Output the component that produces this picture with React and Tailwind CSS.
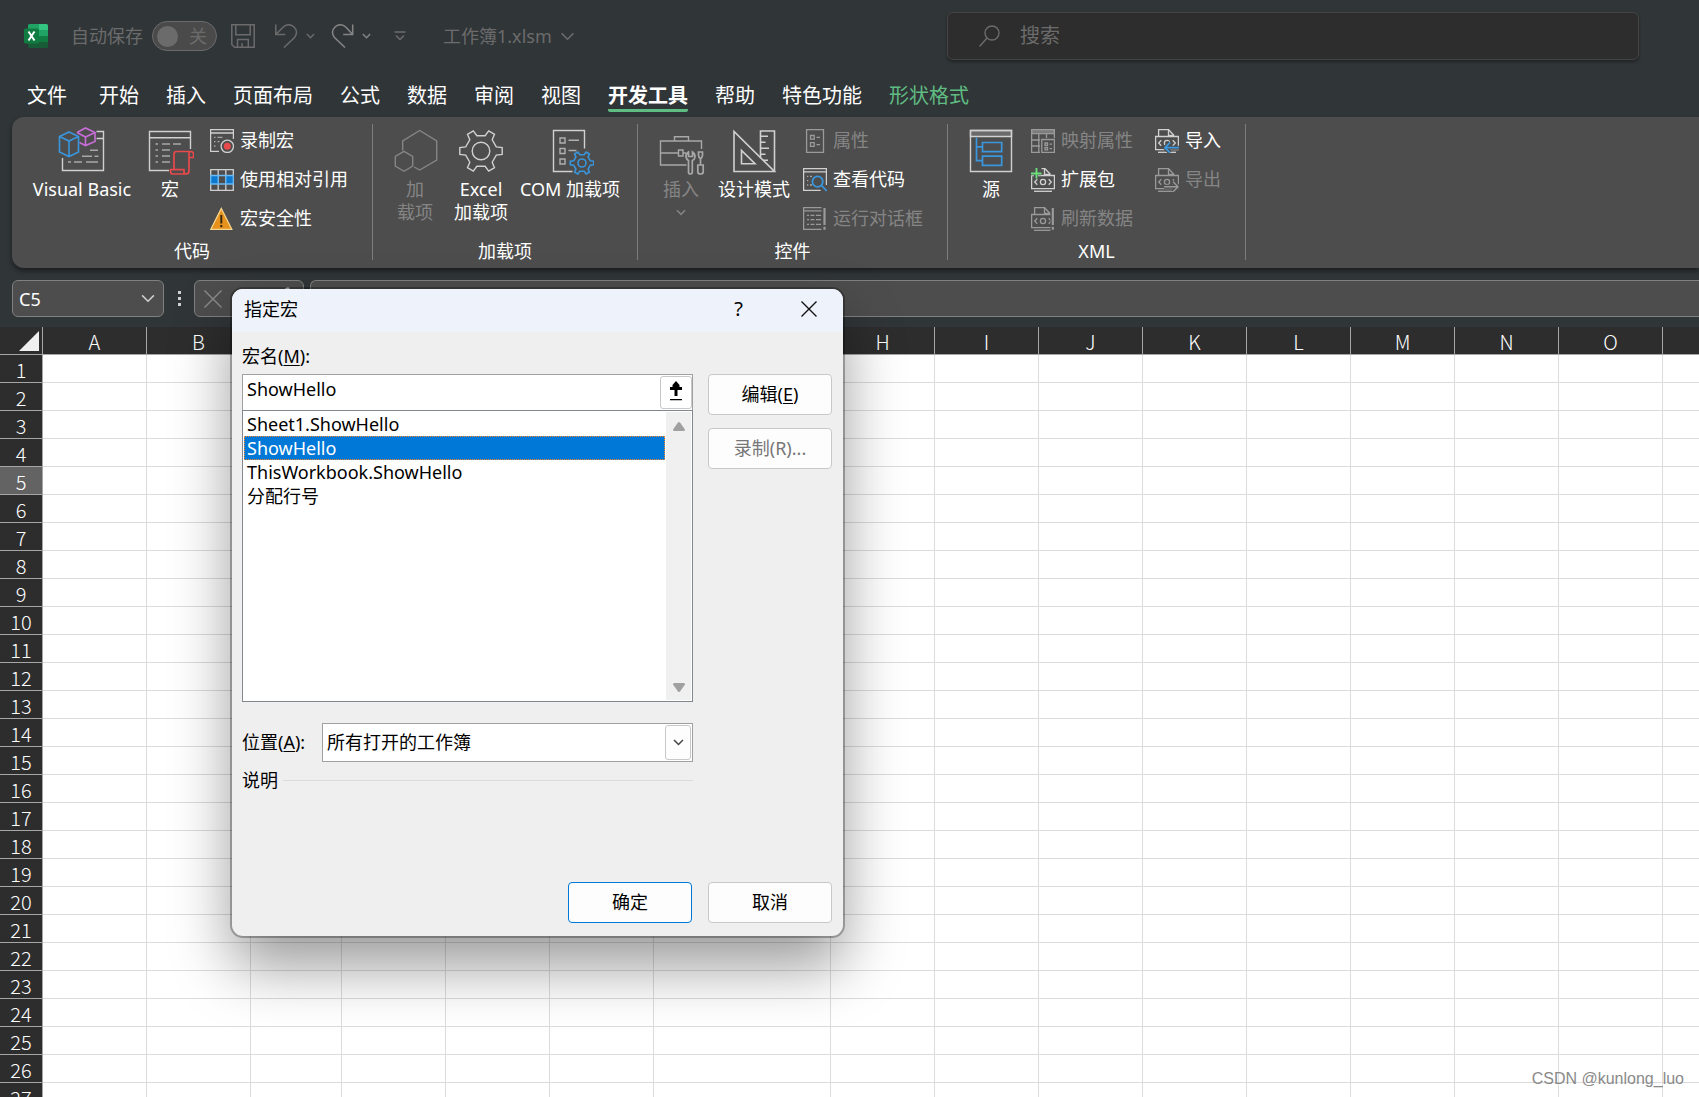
import React from "react";

const tabs = [
  { name: "开始" },
  { name: "插入" },
  { name: "页面布局" },
  { name: "公式" },
  { name: "数据" },
  { name: "审阅" },
  { name: "视图" },
  { name: "开发工具", active: true },
  { name: "帮助" },
  { name: "特色功能" },
  { name: "形状格式", contextual: true },
];

const columns = [
  { name: "A", width: 104 },
  { name: "B", width: 104 },
  { name: "C", width: 91 },
  { name: "D", width: 104 },
  { name: "E", width: 104 },
  { name: "F", width: 104 },
  { name: "G", width: 177 },
  { name: "H", width: 104 },
  { name: "I", width: 104 },
  { name: "J", width: 104 },
  { name: "K", width: 104 },
  { name: "L", width: 104 },
  { name: "M", width: 104 },
  { name: "N", width: 104 },
  { name: "O", width: 104 },
  { name: "", width: 104 },
];

const rows = Array.from({ length: 27 }, (_, i) => i + 1);

const macros = ["Sheet1.ShowHello", "ShowHello", "ThisWorkbook.ShowHello", "分配行号"];

// Outline of a six-tooth gear: two outer points and two valley points per tooth
function gearPath(cx, cy, outer, inner) {
  const points = [];
  for (let i = 0; i < 6; i++) {
    [
      [-15, inner],
      [-9, outer],
      [9, outer],
      [15, inner],
    ].forEach(([offset, r]) => {
      const a = ((i * 60 + offset) * Math.PI) / 180;
      points.push(`${(cx + r * Math.cos(a)).toFixed(1)} ${(cy + r * Math.sin(a)).toFixed(1)}`);
    });
  }
  return `M${points.join("L")}Z`;
}

function BigIcon({ children }) {
  return (
    <svg viewBox="0 0 48 48" className="size-12 shrink-0" fill="none" stroke="#d0d0d0" strokeWidth="1.4" aria-hidden="true">
      {children}
    </svg>
  );
}

function SmallIcon({ children, dim }) {
  return (
    <svg viewBox="0 0 24 24" className="size-6 shrink-0" fill="none" stroke={dim ? "#9a9a9a" : "#d0d0d0"} strokeWidth="1.3" aria-hidden="true">
      {children}
    </svg>
  );
}

function Chevron({ className }) {
  return (
    <svg viewBox="0 0 16 10" className={className} fill="none" stroke="currentColor" strokeWidth="1.5" aria-hidden="true">
      <path vectorEffect="non-scaling-stroke" d="M1.5 1.5 8 8l6.5-6.5" />
    </svg>
  );
}

/* ---------- ribbon icons ---------- */

const VisualBasicIcon = () => (
  <BigIcon>
    <path d="M38.5 4.5h7v39h-41V31M38.5 11.5h7" />
    <path stroke="#a8a8a8" d="M32 23.3h8M24 29.2h10M36.5 29.2h4M10 35h3M16 35h8M28 35h12" />
    <path stroke="#c86dd7" strokeWidth="1.6" d="M19 5.5 27.5 1l9.5 4.5v9l-9.500 4-6-3M19 5.500l8.500 4.500 9.500-4.500M27.500 10v8.500" />
    <path stroke="#3a96dd" strokeWidth="1.6" d="m11 5 9.500 4.500V25L11 29.500 1.500 25V9.500zM1.500 9.500 11 14l9.500-4.500M11 14v15.500" />
  </BigIcon>
);

const MacroIcon = () => (
  <BigIcon>
    <path d="M44.500 22V4.500h-41v39H23M3.500 10.700h41" />
    <path stroke="#a8a8a8" d="M9.500 17H12M16 17h8M27 17h8M9.500 23H12M16 23h8M9.500 29H12M16 29h8M9.500 35H12M16 35h8" />
    <path stroke="#e8494b" strokeWidth="1.7" d="M28 42.500V27q0-2.500 2.500-2.500H45q2.500 0 2.500 2.500v3.500H43M45 24.500q-2 0-2 2.500v17q0 3-3 3H27q-2.500 0-2.500-2.500v-1.800H38V45q0 2 2 2" />
  </BigIcon>
);

const HexIcon = () => (
  <BigIcon>
    <g stroke="#858585">
      <path d="M11.700 23.500V14l17-10.500 17 10.500v19l-17 10-5.500-3" />
      <path d="m13 24.300 8.700 5.200v9.500L13 44.300 4.300 39v-9.500z" />
    </g>
  </BigIcon>
);

const GearIcon = () => (
  <BigIcon>
    <path d={gearPath(24, 24, 21.5, 15.8)} />
    <circle cx="24" cy="24" r="8.8" />
  </BigIcon>
);

const ComIcon = () => (
  <BigIcon>
    <path d="M38.500 21.500v-18h-31v41h19" />
    <path stroke="#b0b0b0" d="M14 11h5v5h-5zM14 21.500h5v5h-5zM14 32h5v5h-5zM22.500 13.200h10.500M22.500 23.500h8" />
    <g stroke="#3a96dd" strokeWidth="1.6">
      <path d={gearPath(36, 36, 11.8, 8.6)} />
      <circle cx="36" cy="36" r="4" />
    </g>
  </BigIcon>
);

const ToolboxIcon = () => (
  <BigIcon>
    <g stroke="#a8a8a8">
      <path d="M44.500 22v-8h-41v24h26M17.500 14v-4.300h14V14M3.500 26h18M26 26h3M21.500 23h4.500v6h-4.500z" />
      <path strokeWidth="1.7" d="M31.500 25q-3 2-2.500 5 .5 2.500 2.500 3.500v12q.3 1.500 1.900 1.500t1.900-1.500v-12q2.500-1 2.700-3.500.2-3-2.500-5v4.500h-4z" />
      <path strokeWidth="1.7" d="M41.500 25h4v3.500l-1 2.500h-2l-1-2.500zM43.500 31v7M40.800 38h5.400v7q-.3 2-2.700 2t-2.700-2z" />
    </g>
  </BigIcon>
);

const DesignIcon = () => (
  <BigIcon>
    <path strokeWidth="1.6" d="M4 4.500v40h40.500zM11.500 23.500v13.200H25z" />
    <path strokeWidth="1.6" d="M30.500 31V4h14v40.500M30.500 9.300H38M30.500 15.300h5M30.500 21.300H39M30.500 27.300h5M33 33.300h5" />
  </BigIcon>
);

const SourceIcon = () => (
  <BigIcon>
    <path fill="#6a6a6a" d="M3.500 3.500h41v6h-41z" />
    <path d="M3.500 3.500h41v41h-41z" />
    <path stroke="#3a96dd" strokeWidth="1.7" d="M9.500 10.500v23.200h6M9.500 19.800h6M15.500 15.500h19.200v9.200H15.500zM15.500 29.200h19.200v9.200H15.500z" />
  </BigIcon>
);

const RecordIcon = () => (
  <SmallIcon>
    <path d="M23.400 10V.6H.6v21.800H9M.6 4h22.800" />
    <path stroke="#a8a8a8" d="M4 8.300h1.500M7.500 8.300h5M4 12.700h1.500M7.500 12.700h2M4 17h1.500" />
    <circle cx="17.3" cy="17.3" r="6.2" />
    <circle cx="17.3" cy="17.3" r="3.5" fill="#e8494b" stroke="none" />
  </SmallIcon>
);

const RelativeIcon = () => (
  <SmallIcon>
    <path d="M.7 1.700h22.600v20.600H.7zM8.200 1.700v20.600M15.800 1.700v20.600" />
    <path fill="#0c78d0" stroke="#6cb8f0" d="M.7 7.500h7.500V16H.7zM15.800 7.500h7.500V16h-7.500z" />
    <path stroke="#6cb8f0" d="M8.200 7.500h7.600M8.200 16h7.600" />
  </SmallIcon>
);

const WarningIcon = () => (
  <SmallIcon>
    <path fill="#e8921e" stroke="#f5d58c" d="M11.300 1.500 21.800 22.300H.8z" />
    <path stroke="#3b2a10" strokeWidth="2" d="M11.300 8v8.500M11.300 18v2.300" />
  </SmallIcon>
);

const PropertiesIcon = () => (
  <SmallIcon dim>
    <path d="M3.600.6h16.900v22.800H3.600zM7.500 6.500h3.700v3.700H7.500zM7.500 13.700h3.700v3.700H7.500zM13.500 8.300H17M13.500 15.600H17" />
  </SmallIcon>
);

const ViewCodeIcon = () => (
  <SmallIcon>
    <path d="M23.400 17V.6H.6v21.700h17M.6 3.800h22.800" />
    <path stroke="#a8a8a8" d="M4 8.300h1.300M7 8.300h2M4 12.700h1.300M4 17h1.300M7 17h2" />
    <g stroke="#3a96dd" strokeWidth="1.8">
      <circle cx="14.6" cy="13.6" r="5.2" />
      <path d="m18.500 17.500 5.200 5.500" />
    </g>
  </SmallIcon>
);

const RunDialogIcon = () => (
  <SmallIcon dim>
    <path d="M18.500.6H.6v21.700h17.900M.6 3.800h17.900M4 8.300h2M7.500 8.300h4M13 8.300h5M4 12.700h2M7.500 12.700h4M13 12.700h5M4 17.300h2M7.500 17.300h4M13 17.300h5" />
    <path strokeWidth="2.2" d="M21.500 1v17M21.500 19.800v3" />
  </SmallIcon>
);

const MapIcon = () => (
  <SmallIcon dim>
    <path fill="#7c7c7c" d="M.6.6h22.800v4H.6z" />
    <path d="M.6.6v22.800H9M23.400.6V9M7.800 4.600v18.800M15.500 4.600V9M.6 11h8.500M.6 17h8.500M10.800 10.500h12.600v12.900H10.800z" />
    <path d="M14 14h2.500v2.300H14zM18.500 15.200H21M14 18.500h2.500v2.300H14zM18.500 19.700H21" />
  </SmallIcon>
);

// Shared body of the XML file icons
const XmlFile = ({ open }) => (
  <>
    <path d={open ? "M10.500.7h3.500L19.500 6.500" : "M3.600 7.400V.7h10L19 6.500"} />
    <path d="M13.500.7v5.600h5.700M.6 14V7.500h22.800v13.200H.6z" />
    <path d="M6.300 11.200 3.700 14l2.600 2.800M17.700 11.200l2.600 2.800-2.600 2.800" />
    <circle cx="12" cy="14" r="2.6" />
    <path d="M3 23.300h18" />
  </>
);

const PackIcon = () => (
  <SmallIcon>
    <XmlFile open />
    <path stroke="#4d4d4d" strokeWidth="4" d="M5 1v9M0 5.200h10" />
    <path stroke="#6ce07c" strokeWidth="1.8" d="M5.500 0v10.500M0 5.500h10.500" />
  </SmallIcon>
);

const RefreshIcon = () => (
  <SmallIcon dim>
    <XmlFile />
    <path stroke="#4d4d4d" strokeWidth="5" d="M22 1v23" />
    <path strokeWidth="2.2" d="M21.800 1v17M21.800 19.800v3" />
  </SmallIcon>
);

const ImportIcon = () => (
  <SmallIcon>
    <XmlFile />
    <path stroke="#4d4d4d" strokeWidth="4" d="M24 18.700H10M15 13.500l-5 5.200 5 5" />
    <path stroke="#3a96dd" strokeWidth="1.8" d="M24 18.700H10M15 13.700l-5 5 5 5" />
  </SmallIcon>
);

const ExportIcon = () => (
  <SmallIcon dim>
    <XmlFile />
    <path stroke="#4d4d4d" strokeWidth="4" d="M9 18.700h14M18 13.500l5 5.200-5 5" />
    <path strokeWidth="1.5" d="M9 18.700h14M18 13.700l5 5-5 5" />
  </SmallIcon>
);

/* ---------- ribbon parts ---------- */

function BigButton({ icon, lines, width, disabled, menu }) {
  return (
    <button
      type="button"
      disabled={disabled}
      className={`flex flex-col items-center pt-[10px] text-lg leading-[23px] whitespace-nowrap ${width} ${disabled ? "text-[#858585]" : "text-white"}`}
    >
      {icon}
      <span className="mt-[3px] flex flex-col">
        {lines.map((line) => (
          <span key={line}>{line}</span>
        ))}
      </span>
      {menu && <Chevron className="mt-2 h-[7px] w-[10px]" />}
    </button>
  );
}

function SmallButton({ icon, label, disabled }) {
  return (
    <button
      type="button"
      disabled={disabled}
      className={`flex h-[39px] items-center gap-[6px] text-lg leading-6 whitespace-nowrap ${disabled ? "text-[#858585]" : "text-white"}`}
    >
      {icon}
      <span className="pb-0.5">{label}</span>
    </button>
  );
}

function Group({ label, width, children }) {
  return (
    <>
      <section aria-label={label} className={`flex shrink-0 flex-col pb-[5px] ${width}`}>
        <div className="flex flex-1 items-start">{children}</div>
        <div className="text-center text-lg leading-6 text-white">{label}</div>
      </section>
      <div className="mt-[7px] mb-2 w-px shrink-0 bg-[#7d7d7d]" />
    </>
  );
}

function TitleBar() {
  return (
    <header className="flex h-[72px] items-center pr-[60px] pl-6 text-lg leading-6 text-[#6b6b6b]">
      <svg viewBox="0 0 24 24" className="size-6 shrink-0" aria-label="Excel">
        <path fill="#21a366" d="M4 1.500Q4 0 5.500 0H15v6H4z" />
        <path fill="#33c481" d="M15 0h7.500Q24 0 24 1.500V6h-9z" />
        <path fill="#107c41" d="M4 6h11v6H4zM15 12h9v6h-9z" />
        <path fill="#21a366" d="M15 6h9v6h-9z" />
        <path fill="#185c37" d="M4 12h11v6h9v4.500q0 1.500-1.500 1.500h-17Q4 24 4 22.500z" />
        <rect y="4.5" width="15" height="15" rx="1.5" fill="#107c41" />
        <path stroke="#fff" strokeWidth="2" d="m4.500 7.500 6 9M10.500 7.500l-6 9" />
      </svg>
      <label className="ml-[23px] flex items-center gap-[9px]">
        自动保存
        <input type="checkbox" role="switch" className="sr-only" />
        <span className="flex h-[30px] w-[65px] items-center justify-between rounded-full border border-[#6b6b6b] bg-[#4a4a4a] pr-[9px] pl-1">
          <span className="size-[21px] rounded-full bg-[#6b6b6b]" />
          <span>关</span>
        </span>
      </label>
      <button type="button" aria-label="保存" className="ml-[14px]">
        <svg viewBox="0 0 24 24" className="size-6" fill="none" stroke="currentColor" strokeWidth="1.5">
          <path d="M.8.8h22.400v22.400H3.500L.8 20.500zM4.800.8v10h14.400V.8M6.500 23v-7.500h10.800V23M11 19v4" />
        </svg>
      </button>
      <button type="button" aria-label="撤消" className="ml-5 flex items-center gap-[7px]">
        <svg viewBox="0 0 24 24" className="size-6" fill="none" stroke="currentColor" strokeWidth="1.5">
          <path d="M.8.500v10h9.500M.8 10.500 8 3.200Q13-1.300 18.500 2.500q5.500 5 1 11L9 23.500" />
        </svg>
        <Chevron className="h-[6px] w-[9px]" />
      </button>
      <button type="button" aria-label="恢复" className="ml-4 flex items-center gap-[7px] text-[#858585]">
        <svg viewBox="0 0 24 24" className="size-6" fill="none" stroke="currentColor" strokeWidth="1.5">
          <path d="M21.700.500v10h-9.500M21.700 10.500 15 3.200Q10-1.300 4.500 2.500q-5.500 5-1 11L14 23.500" />
        </svg>
        <Chevron className="h-[6px] w-[9px]" />
      </button>
      <button type="button" aria-label="自定义快速访问工具栏" className="ml-[23px]">
        <svg viewBox="0 0 12 10" className="h-[10px] w-3" fill="none" stroke="currentColor" strokeWidth="1.5">
          <path d="M.5 1h11M2 4.500l4 4 4-4" />
        </svg>
      </button>
      <button type="button" className="ml-[37px] flex items-center gap-2 whitespace-nowrap">
        工作簿1.xlsm
        <Chevron className="h-[9px] w-[15px]" />
      </button>
      <label className="ml-auto flex h-12 w-[692px] shrink items-center gap-5 rounded-md border border-[#444444] bg-[#2d2d2d] pl-[31px] text-xl shadow-[0_2px_3px_rgba(0,0,0,0.35)]">
        <svg viewBox="0 0 21 22" className="h-[22px] w-[21px] shrink-0" fill="none" stroke="currentColor" strokeWidth="1.4" aria-hidden="true">
          <circle cx="13" cy="8" r="7" />
          <path d="M8 13 .5 21.500" />
        </svg>
        <input type="search" aria-label="搜索" placeholder="搜索" className="w-full bg-transparent placeholder:text-[#6b6b6b] focus:outline-none" />
      </label>
    </header>
  );
}

function TabBar() {
  return (
    <nav className="flex h-[45px] items-start pt-[10px] pl-[27px] text-xl leading-[27px] whitespace-nowrap text-white">
      <button type="button" className="mr-8">文件</button>
      <div className="flex items-start gap-[27px]">
        {tabs.map((tab) => (
          <button
            key={tab.name}
            type="button"
            className={
              tab.active
                ? "rounded-xs border-b-3 border-[#5fbc82] font-bold"
                : tab.contextual
                  ? "text-[#5fbc82]"
                  : ""
            }
          >
            {tab.name}
          </button>
        ))}
      </div>
    </nav>
  );
}

function Ribbon() {
  return (
    <div className="ml-3 flex h-[151px] rounded-l-xl bg-[#4d4d4d] shadow-[0_3px_5px_rgba(0,0,0,0.45)]">
      <Group label="代码" width="w-[360px]">
        <BigButton icon={<VisualBasicIcon />} lines={["Visual Basic"]} width="ml-[18px] w-[104px]" />
        <BigButton icon={<MacroIcon />} lines={["宏"]} width="ml-1 w-16" />
        <div className="ml-2 flex flex-col pt-1">
          <SmallButton icon={<RecordIcon />} label="录制宏" />
          <SmallButton icon={<RelativeIcon />} label="使用相对引用" />
          <SmallButton icon={<WarningIcon />} label="宏安全性" />
        </div>
      </Group>
      <Group label="加载项" width="w-[264px]">
        <BigButton icon={<HexIcon />} lines={["加", "载项"]} width="ml-[10px] w-16 text-center" disabled />
        <BigButton icon={<GearIcon />} lines={["Excel", "加载项"]} width="ml-[2px] w-16 text-center" />
        <BigButton icon={<ComIcon />} lines={["COM 加载项"]} width="ml-[2px] w-[110px]" />
      </Group>
      <Group label="控件" width="w-[309px]">
        <BigButton icon={<ToolboxIcon />} lines={["插入"]} width="ml-[13px] w-[60px]" disabled menu />
        <BigButton icon={<DesignIcon />} lines={["设计模式"]} width="ml-[3px] w-20" />
        <div className="ml-[9px] flex flex-col pt-1">
          <SmallButton icon={<PropertiesIcon />} label="属性" disabled />
          <SmallButton icon={<ViewCodeIcon />} label="查看代码" />
          <SmallButton icon={<RunDialogIcon />} label="运行对话框" disabled />
        </div>
      </Group>
      <Group label="XML" width="w-[297px]">
        <BigButton icon={<SourceIcon />} lines={["源"]} width="ml-[13px] w-[60px]" />
        <div className="ml-[10px] flex w-[124px] flex-col pt-1">
          <SmallButton icon={<MapIcon />} label="映射属性" disabled />
          <SmallButton icon={<PackIcon />} label="扩展包" />
          <SmallButton icon={<RefreshIcon />} label="刷新数据" disabled />
        </div>
        <div className="flex flex-col pt-1">
          <SmallButton icon={<ImportIcon />} label="导入" />
          <SmallButton icon={<ExportIcon />} label="导出" disabled />
        </div>
      </Group>
    </div>
  );
}

function FormulaBar() {
  return (
    <div className="flex h-[59px] items-start pt-3 pl-3 text-lg text-white">
      <div className="flex h-[37px] w-[152px] items-center rounded-md border border-[#808080] bg-[#4d4d4d] pr-[7px] pl-[6px]">
        <input aria-label="名称框" defaultValue="C5" className="w-full min-w-0 bg-transparent focus:outline-none" />
        <Chevron className="h-[9px] w-4 shrink-0 text-[#d0d0d0]" />
      </div>
      <div className="ml-[13px] flex h-[37px] w-1 flex-col items-center justify-center gap-[3px]">
        <span className="size-[3px] bg-[#d0d0d0]" />
        <span className="size-[3px] bg-[#d0d0d0]" />
        <span className="size-[3px] bg-[#d0d0d0]" />
      </div>
      <div className="ml-[13px] flex h-[37px] w-[110px] items-center justify-between rounded-md border border-[#808080] bg-[#4d4d4d] px-[9px] text-[#8c8c8c]">
        <button type="button" aria-label="取消输入">
          <svg viewBox="0 0 18 18" className="size-[18px]" fill="none" stroke="currentColor" strokeWidth="1.4">
            <path d="m.5.500 17 17M17.500.500l-17 17" />
          </svg>
        </button>
        <button type="button" aria-label="插入函数" className="text-[#d0d0d0]">
          <svg viewBox="0 0 20 24" className="h-6 w-5" fill="none" stroke="currentColor" strokeWidth="1.6">
            <path d="M15.500 1.500q-4-1.500-5 3.500L7.500 20q-1 4-4 3M5 9h8M12 14l6 8M18 14l-7 8" />
          </svg>
        </button>
      </div>
      <input aria-label="编辑栏" className="ml-[6px] h-[37px] min-w-0 flex-1 rounded-l-md border border-r-0 border-[#808080] bg-[#4d4d4d] px-2 focus:outline-none" />
    </div>
  );
}

function Sheet() {
  return (
    <div className="min-h-0 flex-1 overflow-hidden bg-white">
      <table className="w-[1760px] table-fixed border-separate border-spacing-0 font-['Noto_Sans_CJK_SC',sans-serif] text-xl font-light text-white">
        <colgroup>
          <col style={{ width: 43 }} />
          {columns.map((col) => (
            <col key={col.name} style={{ width: col.width }} />
          ))}
        </colgroup>
        <thead>
          <tr className="h-7 bg-[#2d2d2d]">
            <th className="border-r border-b border-[#a6a6a6] p-0">
              <svg viewBox="0 0 20 20" className="mr-[3px] ml-auto size-5" aria-label="全选">
                <path fill="#f0f0f0" d="M20 0v20H0z" />
              </svg>
            </th>
            {columns.map((col) => (
              <th key={col.name} scope="col" className="border-r border-b border-[#a6a6a6] p-0 pt-0.5 leading-[25px] font-light">
                {col.name}
              </th>
            ))}
          </tr>
        </thead>
        <tbody>
          {rows.map((row) => (
            <tr key={row} className="h-7">
              <th
                scope="row"
                className={`border-r border-b border-[#a6a6a6] p-0 pt-0.5 leading-[25px] font-light ${row === 5 ? "bg-[#636363]" : "bg-[#2d2d2d]"}`}
              >
                {row}
              </th>
              {columns.map((col) => (
                <td key={col.name} className="border-r border-b border-[#dcdcdc] p-0" />
              ))}
            </tr>
          ))}
        </tbody>
      </table>
    </div>
  );
}

function DialogButton({ children, primary, disabled }) {
  return (
    <button
      type="button"
      disabled={disabled}
      className={`h-[41px] w-[124px] rounded-[4px] border bg-[#fdfdfd] pb-0.5 ${primary ? "border-[#0078d7]" : "border-[#c8c8c8]"} ${disabled ? "text-[#767676]" : ""}`}
    >
      {children}
    </button>
  );
}

function MacroDialog() {
  return (
    <div
      role="dialog"
      aria-labelledby="dialog-title"
      className="absolute top-[289px] left-[232px] flex w-[611px] flex-col overflow-hidden rounded-[11px] bg-[#efefef] text-lg leading-6 text-black shadow-[0_0_0_2px_rgba(0,0,0,0.28),0_30px_60px_rgba(0,0,0,0.4)]"
    >
      <div className="flex h-[43px] items-center bg-[#eef3fb] pr-[26px] pb-[3px] pl-3">
        <h2 id="dialog-title" className="flex-1">指定宏</h2>
        <button type="button" aria-label="帮助" className="text-xl">?</button>
        <button type="button" aria-label="关闭" className="ml-[58px]">
          <svg viewBox="0 0 16 16" className="size-4" fill="none" stroke="#111" strokeWidth="1.4">
            <path d="m.5.500 15 15M15.500.500l-15 15" />
          </svg>
        </button>
      </div>

      <div className="flex flex-col pt-3 pr-[11px] pb-[13px] pl-[10px]">
        <label htmlFor="macro-name" className="h-[30px]">
          宏名(<u className="underline-offset-2">M</u>):
        </label>
        <div className="flex items-start justify-between">
          <div className="w-[451px]">
            <div className="flex h-[36px] border border-b-0 border-[#a0a0a0] bg-white">
              <input id="macro-name" defaultValue="ShowHello" className="min-w-0 flex-1 pb-2 pl-1 focus:outline-none" />
              <button type="button" aria-label="折叠对话框" className="my-px flex w-8 items-center justify-center rounded-[3px] border border-[#c8c8c8] pb-1">
                <svg viewBox="0 0 14 20" className="h-5 w-[14px]">
                  <path d="M7 0 3.500 4v2H1v3h4.500V7v8h3V7v2H13V6h-2.500V4z" />
                  <path d="M1 18h12v1.200H1z" />
                </svg>
              </button>
            </div>
            <div className="flex h-[292px] border border-[#828790] bg-white">
              <ul role="listbox" aria-label="宏" className="flex-1 py-px pl-px">
                {macros.map((macro) => (
                  <li
                    key={macro}
                    role="option"
                    aria-selected={macro === "ShowHello"}
                    className={
                      macro === "ShowHello"
                        ? "h-6 border border-dotted border-[#ff8a28] bg-[#0078d7] pl-[2px] leading-[22px] text-white"
                        : "h-6 pl-[3px]"
                    }
                  >
                    {macro}
                  </li>
                ))}
              </ul>
              <div className="m-px flex w-[25px] flex-col items-center justify-between bg-[#f0f0f0] pt-[10px] pb-2">
                <svg viewBox="0 0 12 9" className="h-[9px] w-3" fill="#a0a0a0">
                  <path d="M5 .5q1-1 2 0l5 7q0 1.500-1 1.500H1Q0 9 0 7.500z" />
                </svg>
                <svg viewBox="0 0 12 9" className="h-[9px] w-3" fill="#a0a0a0">
                  <path d="M5 8.500q1 1 2 0l5-7Q12 0 11 0H1Q0 0 0 1.500z" />
                </svg>
              </div>
            </div>
          </div>
          <div className="flex flex-col gap-[13px]">
            <DialogButton>
              编辑(<u className="underline-offset-2">E</u>)
            </DialogButton>
            <DialogButton disabled>录制(R)...</DialogButton>
          </div>
        </div>

        <div className="mt-[21px] flex w-[451px] items-center justify-between">
          <label htmlFor="location" className="pb-0.5">
            位置(<u className="underline-offset-2">A</u>):
          </label>
          <div className="relative flex h-[39px] w-[371px] border border-[#a0a0a0] bg-white">
            <select id="location" className="w-full appearance-none pb-0.5 pl-1 focus:outline-none">
              <option>所有打开的工作簿</option>
            </select>
            <span className="pointer-events-none absolute inset-y-px right-px flex w-[26px] items-center justify-center rounded-[3px] border border-[#c8c8c8] bg-[#fdfdfd]">
              <Chevron className="h-[7px] w-[11px] text-[#444]" />
            </span>
          </div>
        </div>

        <div className="mt-[6px] flex h-[114px] w-[451px] items-start gap-[5px]">
          <span>说明</span>
          <span className="mt-3 h-px flex-1 bg-[#dadada]" />
        </div>

        <div className="flex justify-end gap-4">
          <DialogButton primary>确定</DialogButton>
          <DialogButton>取消</DialogButton>
        </div>
      </div>
    </div>
  );
}

export default function App() {
  return (
    <div className="relative flex h-screen flex-col overflow-hidden bg-[#303538] font-['Noto_Sans','Noto_Sans_CJK_SC',sans-serif]">
      <TitleBar />
      <TabBar />
      <Ribbon />
      <FormulaBar />
      <Sheet />
      <MacroDialog />
      <div className="absolute right-[15px] bottom-2 font-['Liberation_Sans',sans-serif] text-base leading-5 text-[#8a8a8a]">
        CSDN @kunlong_luo
      </div>
    </div>
  );
}
